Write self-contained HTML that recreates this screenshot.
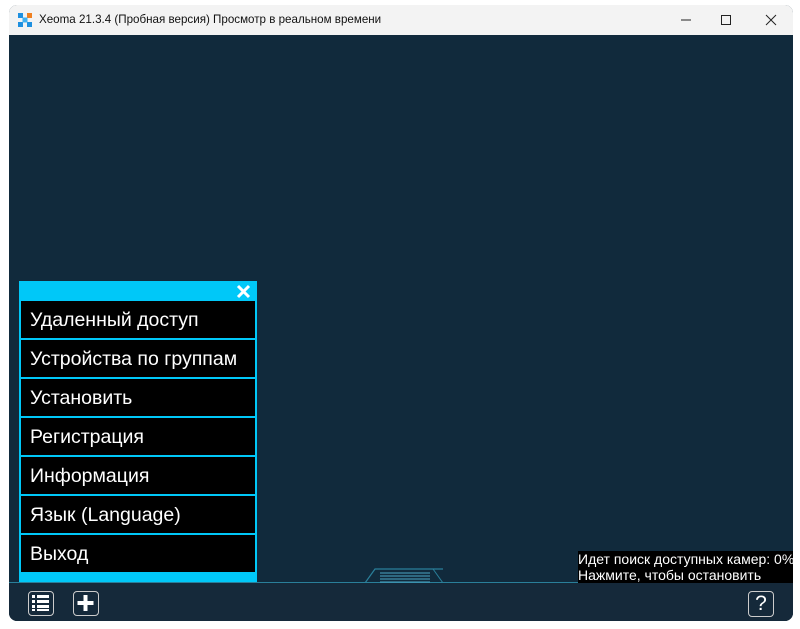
<!DOCTYPE html>
<html><head><meta charset="utf-8"><style>
body{margin:0;width:800px;height:629px;background:#fff;position:relative;overflow:hidden;font-family:"Liberation Sans",sans-serif}
.win{position:absolute;left:9px;top:5px;width:784px;height:616px;border-radius:8px;overflow:hidden;background:#132b3d}
.tb{position:absolute;left:0;top:0;width:784px;height:30px;background:#f3f3f3;font-size:12px;color:#111}
.tb span{position:absolute;left:30px;top:8px;font-size:11.6px}
.main{position:absolute;left:0;top:30px;width:784px;height:547px;background:#112a3c}
.line{position:absolute;left:0;top:577px;width:784px;height:1px;background:#2a7f9a}
.bar{position:absolute;left:0;top:578px;width:784px;height:38px;background:#15293a}
.menu{position:absolute;left:19px;top:281px;width:238px;height:301px;background:#00c8f8}
.it{position:absolute;left:2px;width:234px;height:37px;background:#000;color:#fff;font-size:19.5px;line-height:39px;text-indent:9px}
.st{position:absolute;left:578px;top:551px;width:215px;background:#000;color:#fff;font-size:14px;line-height:16px;white-space:nowrap}
.btn{position:absolute;border:1.5px solid #ccc;border-radius:4px;background:#15293a;box-sizing:border-box}
</style></head><body>
<div class="win">
<div class="tb">
<svg style="position:absolute;left:9px;top:8px" width="14" height="14"><rect x="0" y="0" width="5" height="5" fill="#1e90e0"/><rect x="9" y="0" width="5" height="5" fill="#f08020"/><rect x="0" y="9" width="5" height="5" fill="#1e90e0"/><rect x="9" y="9" width="5" height="5" fill="#1e90e0"/><rect x="4.5" y="4.5" width="5" height="5" fill="#40b0f0"/></svg>
<span>Xeoma 21.3.4 (Пробная версия) Просмотр в реальном времени</span>
<svg style="position:absolute;left:670px;top:8px" width="110" height="14" stroke="#222" fill="none" stroke-width="1"><path d="M2 7H12"/><rect x="42.5" y="2.5" width="9" height="9"/><path d="M87 2L97 12M97 2L87 12"/></svg>
</div>
<div class="main"></div>
<div class="line"></div>
<svg style="position:absolute;left:340px;top:563px" width="100" height="16"><path d="M0 15H16L26 1H94" stroke="#2a7f9a" fill="none" stroke-width="1.2"/><path d="M26 1H84L94 15H100" stroke="#2a7f9a" fill="none"/><g stroke="#4aa6c4"><path d="M31 5H81M31 8H81M31 11H81M31 14H81"/></g></svg>
<div class="bar"></div>
<div class="btn" style="left:19px;top:586px;width:26px;height:25px"><svg width="23" height="22"><g fill="#fff"><rect x="3" y="3" width="3" height="3"/><rect x="3" y="8" width="3" height="3"/><rect x="3" y="13" width="3" height="3"/><rect x="3" y="17" width="3" height="2"/><rect x="8" y="3" width="12" height="3"/><rect x="8" y="8" width="12" height="3"/><rect x="8" y="13" width="12" height="3"/><rect x="8" y="17" width="12" height="2"/></g></svg></div>
<div class="btn" style="left:64px;top:586px;width:26px;height:25px"><svg width="23" height="22"><path d="M11.5 3V19M3.5 11H19.5" stroke="#fff" stroke-width="4"/></svg></div>
<div class="btn" style="left:739px;top:586px;width:26px;height:26px;color:#fff;font-size:21px;text-align:center;line-height:23px">?</div>
</div>
<div class="menu">
<svg style="position:absolute;left:217px;top:3px" width="15" height="15"><path d="M2 2L13 13M13 2L2 13" stroke="#fff" stroke-width="3"/></svg>
<div class="it" style="top:20px">Удаленный доступ</div>
<div class="it" style="top:59px">Устройства по группам</div>
<div class="it" style="top:98px">Установить</div>
<div class="it" style="top:137px">Регистрация</div>
<div class="it" style="top:176px">Информация</div>
<div class="it" style="top:215px">Язык (Language)</div>
<div class="it" style="top:254px">Выход</div>
</div>
<div class="st">Идет поиск доступных камер: 0%<br>Нажмите, чтобы остановить</div>
</body></html>
